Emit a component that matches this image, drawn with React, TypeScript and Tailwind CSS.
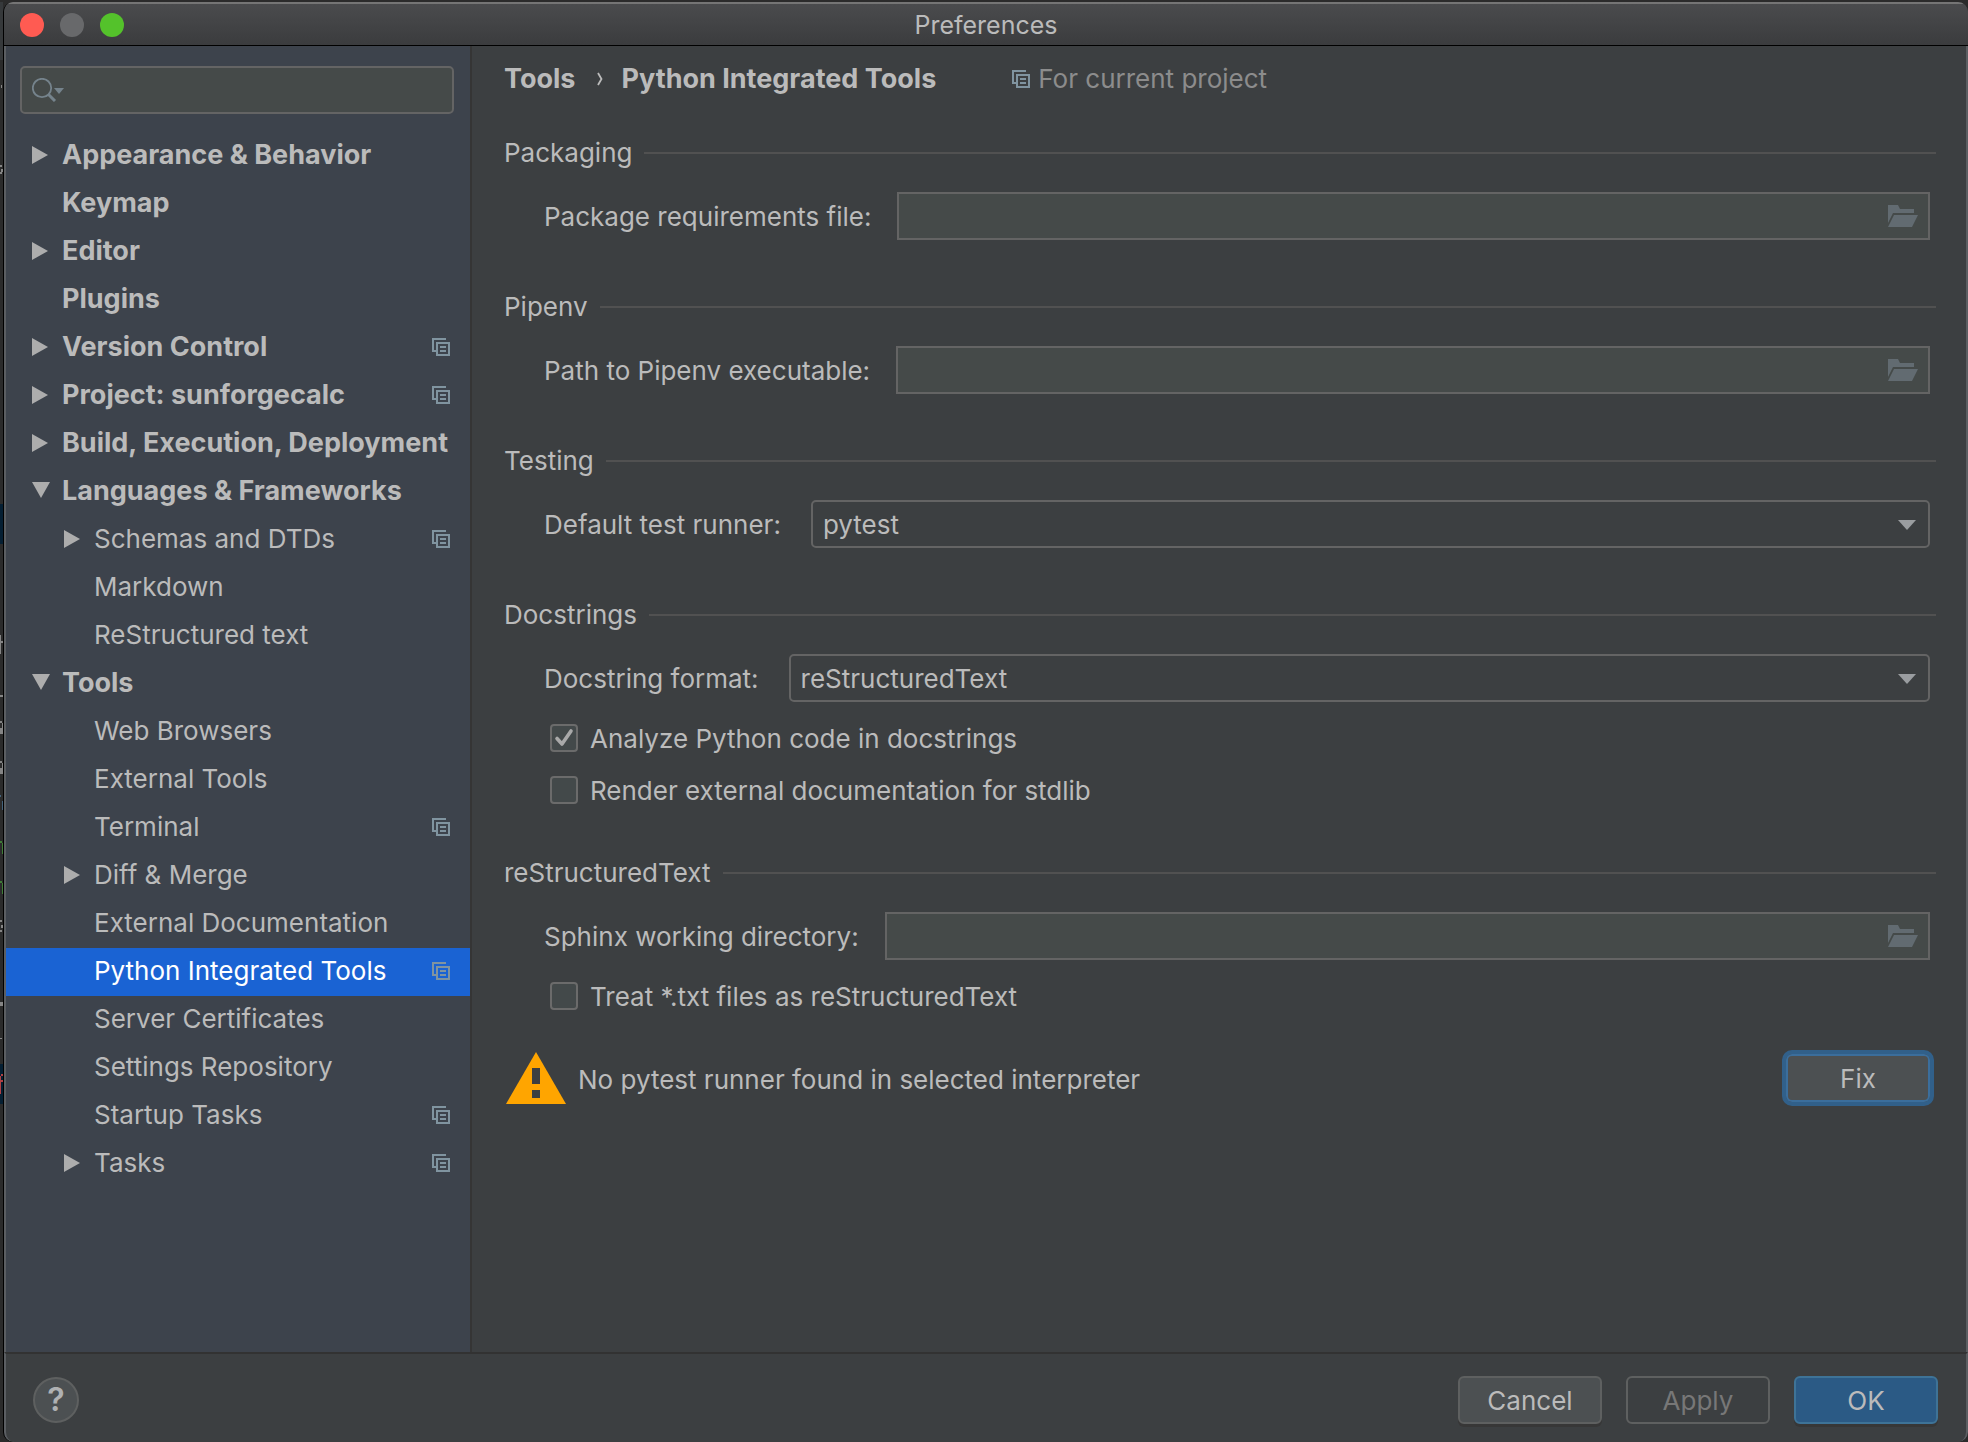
import { useState } from "react";
import type { ReactNode } from "react";

type Item = { label: string; level: 0 | 1; arrow?: "right" | "down"; shared?: boolean };

const ITEMS: Item[] = [
  { label: "Appearance & Behavior", level: 0, arrow: "right" },
  { label: "Keymap", level: 0 },
  { label: "Editor", level: 0, arrow: "right" },
  { label: "Plugins", level: 0 },
  { label: "Version Control", level: 0, arrow: "right", shared: true },
  { label: "Project: sunforgecalc", level: 0, arrow: "right", shared: true },
  { label: "Build, Execution, Deployment", level: 0, arrow: "right" },
  { label: "Languages & Frameworks", level: 0, arrow: "down" },
  { label: "Schemas and DTDs", level: 1, arrow: "right", shared: true },
  { label: "Markdown", level: 1 },
  { label: "ReStructured text", level: 1 },
  { label: "Tools", level: 0, arrow: "down" },
  { label: "Web Browsers", level: 1 },
  { label: "External Tools", level: 1 },
  { label: "Terminal", level: 1, shared: true },
  { label: "Diff & Merge", level: 1, arrow: "right" },
  { label: "External Documentation", level: 1 },
  { label: "Python Integrated Tools", level: 1, shared: true },
  { label: "Server Certificates", level: 1 },
  { label: "Settings Repository", level: 1 },
  { label: "Startup Tasks", level: 1, shared: true },
  { label: "Tasks", level: 1, arrow: "right", shared: true },
];

/* Sliver of the editor window that shows behind the dialog's left edge. */
function EditorSliver() {
  return (
    <svg className="h-[1440px] w-[3px]" viewBox="0 2 3 1440" aria-hidden="true">
      <path d="M0 0h3v60H0z" fill="#36393b" />
      <path d="M0 504h3v40H0zM0 1064h3v40H0z" fill="#051f33" />
      <path d="M1 85h1v3H1zM0 165h2v2H0zM1 169h2v3H1zM0 172h2v2H0zM0 635h1v19H0zM1 641h2v2H1zM0 695h3v2H0zM0 721h2v2H0zM2 723h1v11H2zM0 728h2v6H0zM0 761h2v2H0zM2 763h1v11H2zM0 768h2v6H0zM0 920h2v2H0zM1 925h2v3H1zM0 930h2v2H0zM0 1002h3v4H0zM0 1038h2v1H0z" fill="#858585" />
      <path d="M0 795h1v2H0zM2 801h1v9H2z" fill="#44637c" />
      <path d="M0 841h2v2H0zM2 843h1v11H2zM0 881h2v2H0zM2 883h1v11H2z" fill="#3f7d37" />
      <path d="M1 1074h2v2H1zM0 1080h3v2H0zM0 1076h1v18H0z" fill="#b04044" />
    </svg>
  );
}

function ProjectIcon() {
  return (
    <svg className="size-[18px] shrink-0" viewBox="0 0 18 18" fill="#8094a0" aria-hidden="true">
      <path d="M0 0h14v2H2v10h2v2H0z" />
      <path fillRule="evenodd" d="M4 4h14v14H4zM6 6v10h10V6z" />
      <path d="M8 8h6v2H8zM8 12h6v2H8z" />
    </svg>
  );
}

function Arrow({ dir }: { dir?: "right" | "down" }) {
  return (
    <svg className="h-[18px] w-[31px] shrink-0" viewBox="0 0 31 18" fill="#adadad" aria-hidden="true">
      {dir === "right" && <path d="M1 0v18l16-9z" />}
      {dir === "down" && <path d="M1 0h18l-9 16z" />}
    </svg>
  );
}

function FolderIcon() {
  return (
    <svg className="h-[22px] w-[30px]" viewBox="0 0 30 22" fill="#626b71" aria-hidden="true">
      <path d="M0 0h10l2 4h14v4H5L0 18z" />
      <path d="M6 10h24l-6 12H0z" />
    </svg>
  );
}

function SearchIcon() {
  return (
    <svg className="h-6 w-8 shrink-0" viewBox="0 0 32 24" aria-hidden="true">
      <circle cx="10" cy="10" r="9.2" fill="none" stroke="#75838c" strokeWidth="1.8" />
      <path d="M16.500 16.500l6.500 6.500" stroke="#75838c" strokeWidth="3" />
      <path d="M22 10h10l-5 6z" fill="#75838c" />
    </svg>
  );
}

function Section({ title, children }: { title: string; children: ReactNode }) {
  return (
    <section>
      <div className="flex h-[50px] items-center gap-3 pr-[30px]">
        <h2>{title}</h2>
        <div className="h-0.5 grow bg-[#515151]" />
      </div>
      <div className="pl-10 pr-9">{children}</div>
    </section>
  );
}

function PathField({ id, label }: { id: string; label: string }) {
  return (
    <div className="mt-[14px] flex h-12 items-center gap-[26px]">
      <label htmlFor={id} className="shrink-0 pt-0.5">{label}</label>
      <div className="flex h-12 grow items-center border-2 border-[#646464] bg-[#454a49]">
        <input id={id} type="text" className="h-full min-w-0 grow bg-transparent px-2 outline-none" />
        <button type="button" aria-label={"Browse: " + label} className="mr-[10px]">
          <FolderIcon />
        </button>
      </div>
    </div>
  );
}

function SelectField({ id, label, options }: { id: string; label: string; options: string[] }) {
  return (
    <div className="mt-[14px] flex h-12 items-center gap-[30px]">
      <label htmlFor={id} className="shrink-0 pt-0.5">{label}</label>
      <div className="relative grow">
        <select id={id} className="block h-12 w-full appearance-none rounded-[5px] border-2 border-[#646464] bg-[#3c3f41] pl-[10px] pr-12 pt-0.5 outline-none">
          {options.map((o) => (
            <option key={o}>{o}</option>
          ))}
        </select>
        <svg className="pointer-events-none absolute right-[14px] top-5 h-[10px] w-[18px]" viewBox="0 0 18 10" fill="#9a9da0" aria-hidden="true">
          <path d="M0 0h18l-9 10z" />
        </svg>
      </div>
    </div>
  );
}

function CheckField({ label, initial = false }: { label: string; initial?: boolean }) {
  const [on, setOn] = useState(initial);
  return (
    <label className="flex h-[52px] items-center gap-3 pl-1.5">
      <span className="relative size-7 shrink-0">
        <input
          type="checkbox"
          checked={on}
          onChange={(e) => setOn(e.target.checked)}
          className="block size-7 appearance-none rounded-[4px] border-2 border-[#6b6b6b] bg-[#43494a]"
        />
        {on && (
          <svg className="pointer-events-none absolute inset-0 size-7" viewBox="0 0 28 28" fill="none" aria-hidden="true">
            <path d="M7 14.500l5 5.500L21 7" stroke="#a9a9a9" strokeWidth="3.600" strokeLinecap="round" strokeLinejoin="round" />
          </svg>
        )}
      </span>
      <span className="pt-0.5">{label}</span>
    </label>
  );
}

export default function App() {
  const [selected, setSelected] = useState("Python Integrated Tools");
  return (
    <div className="flex min-h-screen bg-[#2b2b2b] pt-0.5 font-['Inter','Liberation_Sans',sans-serif] text-[26px] leading-8 text-[#bbbbbb]">
      <div className="w-[3px] shrink-0">
        <EditorSliver />
      </div>
      <div className="flex min-w-0 grow flex-col overflow-hidden rounded-[10px] border-l border-black bg-[#3c3f41]">
        <header className="grid h-11 shrink-0 grid-cols-[1fr_auto_1fr] items-center border-b border-t-2 border-b-black border-t-[#757575] bg-linear-to-b from-[#4a4b4d] to-[#3b3c3e] px-4">
          <div className="flex gap-4">
            <button type="button" aria-label="Close" className="size-6 rounded-full bg-[#ff5b52]" />
            <button type="button" aria-label="Minimize" className="size-6 rounded-full bg-[#68696b]" />
            <button type="button" aria-label="Zoom" className="size-6 rounded-full bg-[#54c22b]" />
          </div>
          <h1 className="text-[25px]">Preferences</h1>
        </header>

        <div className="flex grow border-x-2 border-[#5b5e62]">
          <aside className="flex w-[466px] shrink-0 flex-col border-r-2 border-[#353535] bg-[#3d434c]">
            <label className="ml-3.5 mr-4 mt-5 flex h-12 items-center rounded-[5px] border-2 border-[#646464] bg-[#454a49] pl-2.5">
              <SearchIcon />
              <input type="search" aria-label="Search settings" className="min-w-0 grow bg-transparent px-2 outline-none" />
            </label>
            <nav className="mt-[18px]">
              {ITEMS.map((it) => {
                const active = it.label === selected;
                return (
                  <button
                    key={it.label}
                    type="button"
                    onClick={() => setSelected(it.label)}
                    className={
                      "flex h-12 w-full items-center whitespace-nowrap pb-0.5 pr-5 text-left " +
                      (it.level === 0 ? "pl-[25px] text-[27px] font-bold " : "pl-[57px] ") +
                      (active ? "bg-[#1a63d3] text-white" : "")
                    }
                  >
                    <Arrow dir={it.arrow} />
                    <span className="grow">{it.label}</span>
                    {it.shared && <ProjectIcon />}
                  </button>
                );
              })}
            </nav>
          </aside>

          <main className="flex min-w-0 grow flex-col pl-8">
            <div className="flex h-[66px] items-center">
              <div className="flex items-center text-[27px] font-bold">
                <a href="#tools">Tools</a>
                <svg className="ml-[22px] mr-[18px] h-4 w-1.5" viewBox="0 0 6 16" fill="none" stroke="#bbbbbb" strokeWidth="1.800" aria-hidden="true">
                  <path d="M1 2l3.500 6L1 14" />
                </svg>
                <span>Python Integrated Tools</span>
              </div>
              <div className="ml-[76px] flex items-center gap-2 text-[#8c8c8c]">
                <ProjectIcon />
                <span>For current project</span>
              </div>
            </div>

            <div className="mt-4 flex flex-col">
              <Section title="Packaging">
                <PathField id="requirements" label="Package requirements file:" />
              </Section>
              <div className="mt-[42px]">
                <Section title="Pipenv">
                  <PathField id="pipenv" label="Path to Pipenv executable:" />
                </Section>
              </div>
              <div className="mt-[42px]">
                <Section title="Testing">
                  <SelectField id="runner" label="Default test runner:" options={["pytest", "Unittests", "Nosetests"]} />
                </Section>
              </div>
              <div className="mt-[42px]">
                <Section title="Docstrings">
                  <SelectField id="format" label="Docstring format:" options={["reStructuredText", "Plain", "Epytext", "Google", "NumPy"]} />
                  <div className="mt-2.5">
                    <CheckField label="Analyze Python code in docstrings" initial />
                    <CheckField label="Render external documentation for stdlib" />
                  </div>
                </Section>
              </div>
              <div className="mt-8">
                <Section title="reStructuredText">
                  <PathField id="sphinx" label="Sphinx working directory:" />
                  <div className="mt-2.5">
                    <CheckField label="Treat *.txt files as reStructuredText" />
                  </div>
                </Section>
              </div>
            </div>

            <div className="mt-7 flex items-center pl-0.5 pr-8">
              <svg className="h-[52px] w-[60px] shrink-0" viewBox="0 0 60 52" aria-hidden="true">
                <path d="M30 0l30 52H0z" fill="#ffa500" />
                <path d="M26 16h8v16h-8zM26 38h8v8h-8z" fill="#3c3f41" />
              </svg>
              <span className="ml-3 grow pt-1">No pytest runner found in selected interpreter</span>
              <button type="button" className="h-14 w-[152px] rounded-[10px] border-4 border-[#31608a] bg-[#4c5052] pt-0.5 shadow-[inset_0_0_0_2px_#3b6e9c]">
                Fix
              </button>
            </div>
          </main>
        </div>

        <footer className="flex h-[90px] shrink-0 items-center gap-6 rounded-b-[10px] border-x-2 border-t-2 border-x-[#5b5e62] border-t-[#323232] pl-[27px] pr-7 pt-1">
          <button type="button" aria-label="Help" className="flex size-[46px] items-center justify-center rounded-full border-2 border-[#5e6060] bg-[#4c5052] text-[32px] font-semibold text-[#afb1b3]">
            ?
          </button>
          <div className="grow" />
          <button type="button" className="h-12 w-36 rounded-md border-2 border-[#5e6060] bg-[#4c5052] pt-0.5 shadow-[0_3px_0_#373737]">Cancel</button>
          <button type="button" disabled className="h-12 w-36 rounded-md border-2 border-[#5e6060] pt-0.5 text-[#777777]">Apply</button>
          <button type="button" className="h-12 w-36 rounded-md border-2 border-[#3e7397] bg-[#2b5a85] pt-0.5 shadow-[0_3px_0_#373737]">OK</button>
        </footer>
      </div>
    </div>
  );
}
